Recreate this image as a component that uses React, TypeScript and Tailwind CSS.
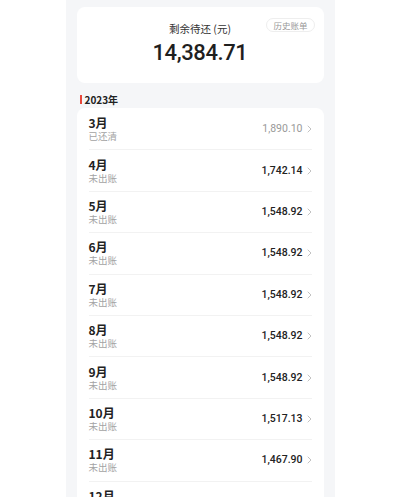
import React from "react";

type Bill = {
    month: string;
    status: string;
    amount: string;
    paid?: boolean;
};

const bills: Bill[] = [
    { month: "3月", status: "已还清", amount: "1,890.10", paid: true },
    { month: "4月", status: "未出账", amount: "1,742.14" },
    { month: "5月", status: "未出账", amount: "1,548.92" },
    { month: "6月", status: "未出账", amount: "1,548.92" },
    { month: "7月", status: "未出账", amount: "1,548.92" },
    { month: "8月", status: "未出账", amount: "1,548.92" },
    { month: "9月", status: "未出账", amount: "1,548.92" },
    { month: "10月", status: "未出账", amount: "1,517.13" },
    { month: "11月", status: "未出账", amount: "1,467.90" },
    { month: "12月", status: "未出账", amount: "1,467.90" },
];

const cjk = "font-['Noto_Sans_CJK_SC','Noto_Sans',sans-serif]";
const num = "font-['Roboto','Noto_Sans_CJK_SC',sans-serif]";

function Chevron() {
    return (
        <svg className="w-[5px] h-[8px] ml-[4px] text-[#bbbbbb]" viewBox="0 0 5 8" fill="none">
            <path d="M1 1l3 3-3 3" stroke="currentColor" strokeWidth="0.9" strokeLinecap="round" strokeLinejoin="round" />
        </svg>
    );
}

export default function App() {
    return (
        <div className={`w-full h-[497px] overflow-hidden bg-white ${cjk}`}>
            <div className="w-[269px] mx-auto min-h-[497px] bg-[#f5f6f8] px-[11px] pt-[7px]">
                {/* Summary card */}
                <div className="relative h-[76px] rounded-lg bg-white flex flex-col items-center pt-[15px]">
                    <div className="text-[10.5px] leading-[14px] text-[#333333]">剩余待还 (元)</div>
                    <div className={`mt-[3px] text-[22px] leading-[28px] font-medium tracking-[-0.4px] text-[#1f1f1f] ${num}`}>14,384.71</div>
                    <div className="absolute right-[9px] top-[11px] h-[14px] px-[6px] flex items-center rounded-full border border-[#eeeeee] text-[8.5px] text-[#999999]">
                        历史账单
                    </div>
                </div>

                {/* Year header */}
                <div className="flex items-center pl-[3px] mt-[11px] mb-[3px] h-[11px]">
                    <span className="w-[2px] h-[9px] bg-[#e8483b] mr-[3px]" />
                    <span className="text-[10px] leading-[11px] font-bold text-[#222222]">2023年</span>
                </div>

                {/* Bills list */}
                <div className="rounded-t-lg bg-white">
                    {bills.map((b, i) => (
                        <div key={b.month} className="px-[12px]">
                            <div className={`h-[41.4px] flex items-center justify-between ${i > 0 ? "border-t border-[#f2f2f2]" : ""}`}>
                                <div className="flex flex-col">
                                    <span className="text-[12px] leading-[15px] font-bold text-[#222222]">{b.month}</span>
                                    <span className="text-[9.5px] leading-[13px] text-[#a3a3a3]">{b.status}</span>
                                </div>
                                <div className="flex items-center">
                                    <span className={`text-[10.5px] ${num} ${b.paid ? "text-[#999999]" : "font-medium text-[#222222]"}`}>
                                        {b.amount}
                                    </span>
                                    <Chevron />
                                </div>
                            </div>
                        </div>
                    ))}
                </div>
            </div>
        </div>
    );
}
